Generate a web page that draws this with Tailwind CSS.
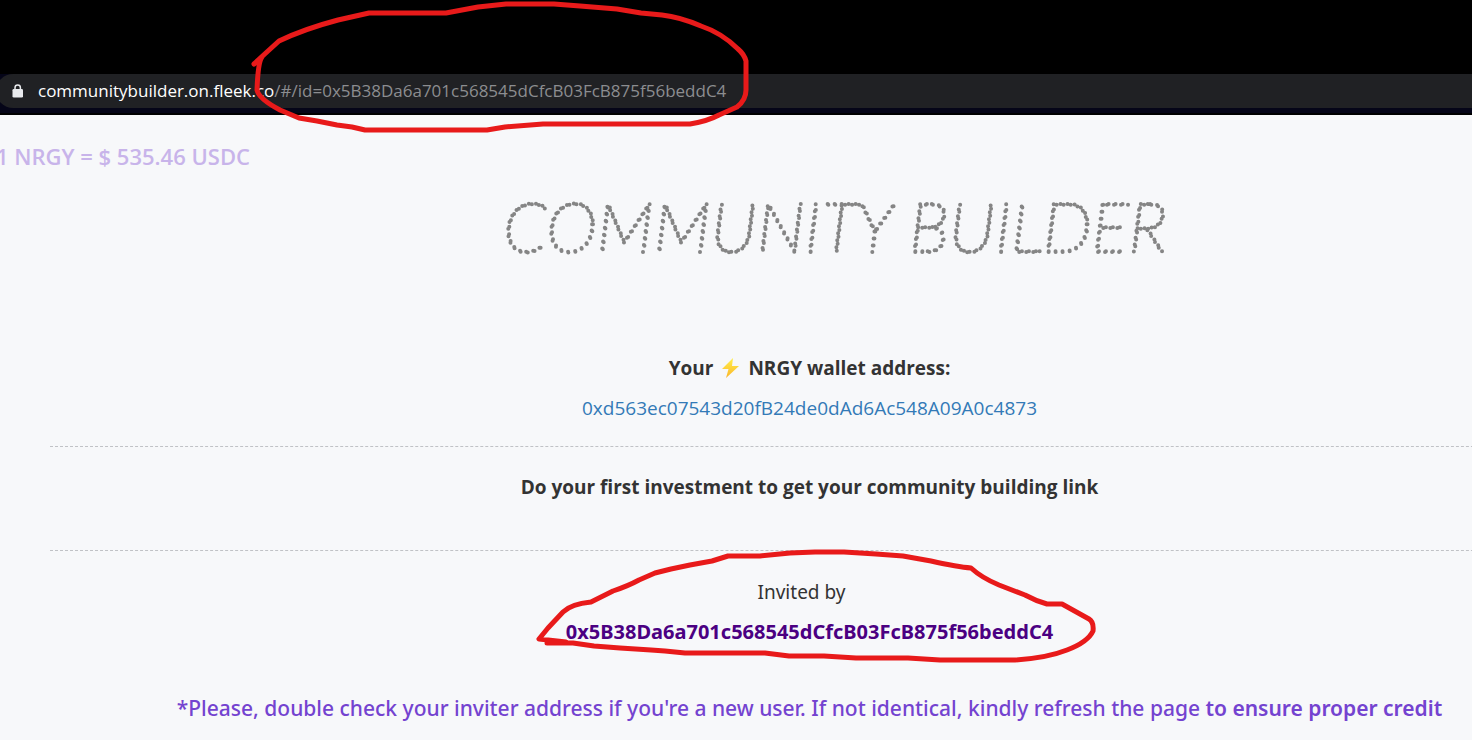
<!DOCTYPE html>
<html lang="en">
<head>
<meta charset="utf-8">
<title>Community Builder</title>
<script src="https://cdn.jsdelivr.net/npm/@tailwindcss/browser@4"></script>
</head>
<body class="relative min-h-screen overflow-x-hidden bg-[#f7f8fa] font-['Open_Sans','Noto_Sans',sans-serif] text-[#333]">
<header class="border-b-2 border-black bg-[#050518] pb-[5px]">
  <div class="h-[74px] bg-black"></div>
  <div class="-ml-1 flex h-[34px] items-center rounded-l-full bg-[#202124] pl-4 text-[17px] whitespace-nowrap">
    <svg class="mr-3.5 h-3.5 w-3 shrink-0" viewBox="0 0 12 14" aria-label="Secure"><path d="M3 6V3.700a2.700 2.700 0 0 1 5.400 0V6" fill="none" stroke="#e8eaed" stroke-width="1.500"/><rect x=".5" y="5" width="10.500" height="8.600" rx="1.300" fill="#e8eaed"/></svg>
    <span class="text-white">communitybuilder.on.fleek.co</span><span class="text-[#8c8d90]">/#/id=0x5B38Da6a701c568545dCfcB03FcB875f56beddC4</span>
  </div>
</header>
<main>
  <p class="-ml-1 pt-[25px] text-[22px] leading-8 font-semibold text-[#c8b4ea]">1 NRGY = $ 535.46 USDC</p>
  <h1 class="-mr-[97px] mt-[25px] pl-[100px]">
    <svg class="mx-auto block h-[72px] w-[720px] overflow-visible"><text x="50%" y="55" text-anchor="middle" class="fill-none stroke-[#858585] font-['Lato',sans-serif] text-[69px] font-thin italic" stroke-width="4" stroke-linecap="round" stroke-dasharray="0 7">COMMUNITY BUILDER</text></svg>
  </h1>
  <div class="-mr-[97px] ml-[50px] text-center text-[19px] leading-10">
    <section class="mt-[79px] border-b border-dashed border-[#c0c2c6] pb-[18px]">
      <h2 class="flex items-center justify-center gap-2 font-bold">Your <svg class="h-5 w-[19px]" viewBox="0 0 19 20" aria-label="Energy"><defs><linearGradient id="bolt" x2="0" y2="1"><stop stop-color="#fff04a"/><stop offset="1" stop-color="#fbb52c"/></linearGradient></defs><path d="M12 0 1 11h6.500L5 20 18 8h-7z" fill="url(#bolt)"/></svg> NRGY wallet address:</h2>
      <a href="#" class="block text-[#337ab7]">0xd563ec07543d20fB24de0dAd6Ac548A09A0c4873</a>
    </section>
    <section class="border-b border-dashed border-[#c0c2c6] pt-5 pb-[43px]"><h2 class="font-bold">Do your first investment to get your community building link</h2></section>
    <section class="pt-[21px] font-['Noto_Sans',sans-serif]">
      <p class="pr-4">Invited by</p>
      <p class="text-xl leading-10 font-bold text-[#4b0082]">0x5B38Da6a701c568545dCfcB03FcB875f56beddC4</p>
    </section>
    <p class="mt-9 font-['Noto_Sans',sans-serif] text-[21px] whitespace-nowrap text-[#7443d0]"><span class="font-medium">*Please, double check your inviter address if you're a new user. If not identical, kindly refresh the page</span> <span class="font-semibold">to ensure proper credit</span></p>
  </div>
</main>
<svg class="pointer-events-none absolute top-0 left-0 h-[740px] w-[1472px]" fill="none" stroke="#e81a1a" stroke-width="5" stroke-linecap="round" stroke-linejoin="round" aria-hidden="true">
  <path d="M254 64L262 57Q258 62 257 90Q259 99 280 110L299 118L317 121L337 125L352 127L365 130H487L505 127L543 124H690Q708 121 719 115L737 107Q746 100 746 90V61Q744 54 738 49Q722 33 701 26Q680 17 662 15L641 13L617 9L580 6L554 4H506L478 7L446 13H369L338 20Q304 29 279 41L268 51L255 63"/>
  <path d="M547 643H573L594 646L620 648L651 650L665 651L685 653H765L789 656H824L856 658H908L940 660H1015Q1047 658 1067 650Q1088 642 1093 631Q1094 622 1089 619L1062 604H1047Q1036 601 1025 595L999 585Q982 578 971 568Q958 567 931 561L903 556L876 554L844 552H815L790 553L760 556H728L712 561L690 565L671 569L655 573L639 580Q628 586 613 591L591 602Q571 604 563 612L548 628L539 639L566 642"/>
</svg>
</body>
</html>
